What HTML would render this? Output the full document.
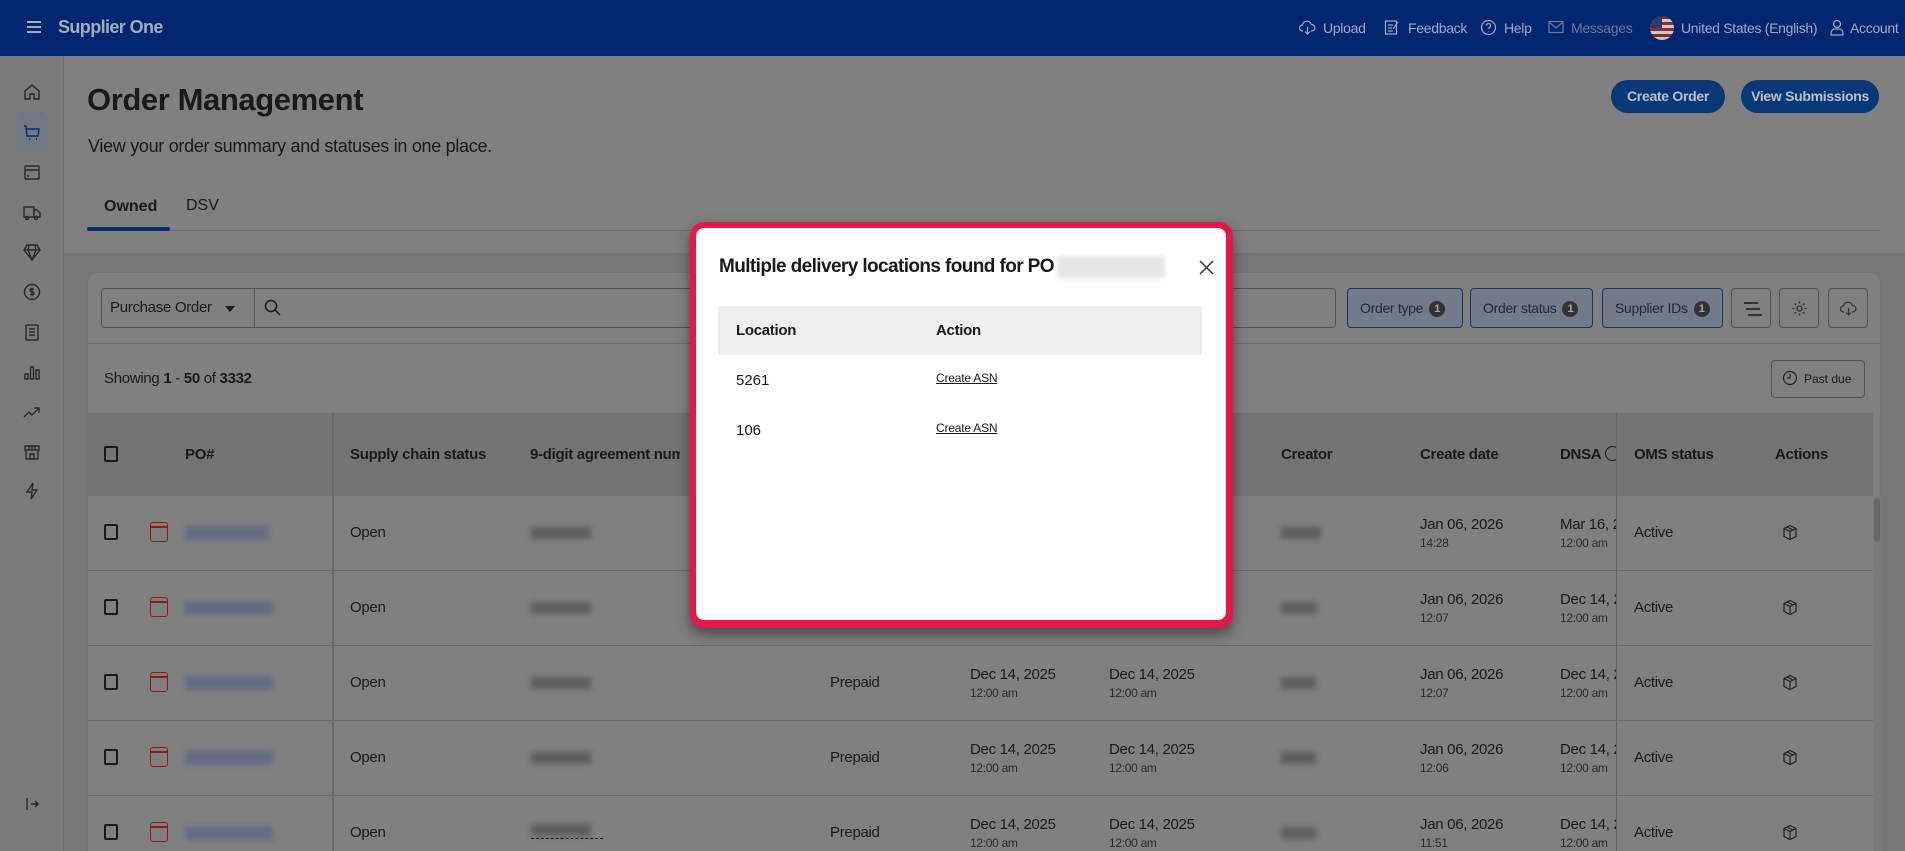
<!DOCTYPE html>
<html style="width:1905px;height:851px;overflow:hidden"><head><meta charset="utf-8"><style>
*{box-sizing:border-box;margin:0;padding:0}
body{width:1905px;height:851px;overflow:hidden;background:#808080;font-family:"Liberation Sans",sans-serif;color:#1a1a1a;position:relative}
.a{position:absolute}
.hdr{left:0;top:0;width:1905px;height:56px;background:#002670}
.ht{color:#a3abbf;font-size:14px;top:20px;letter-spacing:-0.3px}
.side{left:0;top:56px;width:64px;height:795px;background:#7b7b7b;border-right:1px solid #6e6e6e}
.si{left:22px;width:20px;height:20px}
.si svg{width:20px;height:20px;fill:none;stroke:#2a2a2a;stroke-width:1.4}
.btn{background:#0a3775;color:#b9c0cf;font-weight:bold;font-size:14px;border-radius:20px;text-align:center;line-height:33px;top:80px;height:33px;letter-spacing:-0.3px}
.fb{top:288px;height:40px;border:1px solid #1c3766;background:#717b8a;border-radius:4px;font-size:14px;color:#1e2a44;line-height:38px;padding-left:12px;letter-spacing:-0.3px}
.bd{display:inline-block;width:16px;height:16px;border-radius:8px;background:#333;color:#aaa;font-size:11px;line-height:16px;text-align:center;font-weight:bold;margin-left:6px;vertical-align:1px}
.ib{top:288px;height:40px;width:40px;border:1px solid #555;border-radius:4px}
.th{font-weight:bold;font-size:15px;top:446px;letter-spacing:-0.3px}
.rl{height:1px;background:#6c6c6c;left:87px;width:1786px}
.t{font-size:15px;letter-spacing:-0.3px}
.s{font-size:12px;color:#2b2b2b;letter-spacing:-0.3px}
.blur{background:#646c84;filter:blur(3px);height:14px}
.blurg{background:#5e5e5e;filter:blur(3px);height:12px}
.cb{width:14px;height:16px;border:2px solid #1a1a1a;border-radius:2px;left:104px}
.cal{left:150px;width:18px;height:20px;border:1.5px solid #8f1c1c;border-radius:3px}
.cal:before{content:"";position:absolute;left:-1px;right:-1px;top:3px;height:1.5px;background:#8f1c1c}
</style></head><body>
<div class="a hdr"></div>
<div class="a" style="left:27px;top:21px;width:14px;height:2px;background:#a3abbf;box-shadow:0 5px 0 #a3abbf,0 10px 0 #a3abbf"></div>
<div class="a" style="left:58px;top:17px;color:#a3abbf;font-weight:bold;font-size:18px;letter-spacing:-0.6px">Supplier One</div>
<svg class="a" style="left:1299px;top:19px" width="17" height="17" viewBox="0 0 17 17" fill="none" stroke="#a3abbf" stroke-width="1.2"><path d="M4 12H3.5a3 3 0 0 1 0-6 4.5 4.5 0 0 1 8.8-.5A3 3 0 0 1 13 12h-1M8.5 8v7M6 12.5l2.5 2.5 2.5-2.5"/></svg>
<div class="a ht" style="left:1323px">Upload</div>
<svg class="a" style="left:1384px;top:19px" width="16" height="17" viewBox="0 0 16 17" fill="none" stroke="#a3abbf" stroke-width="1.2"><rect x="1.5" y="2" width="11" height="13"/><path d="M4 6h5M4 9h4M4 12h5M9 10l5-7"/></svg>
<div class="a ht" style="left:1408px">Feedback</div>
<svg class="a" style="left:1480px;top:19px" width="17" height="17" viewBox="0 0 17 17" fill="none" stroke="#a3abbf" stroke-width="1.2"><circle cx="8.5" cy="8.5" r="7"/><path d="M6.5 6.5a2 2 0 1 1 2.5 2v1.5M8.5 12v.5"/></svg>
<div class="a ht" style="left:1504px">Help</div>
<svg class="a" style="left:1548px;top:20px" width="16" height="14" viewBox="0 0 16 14" fill="none" stroke="#6f7a99" stroke-width="1.2"><rect x="1" y="1.5" width="14" height="11"/><path d="M1 2l7 6 7-6"/></svg>
<div class="a ht" style="left:1571px;color:#6f7a99">Messages</div>
<div class="a" style="left:1650px;top:16px;width:24px;height:24px;border-radius:12px;overflow:hidden;background:repeating-linear-gradient(#8a2a35 0 3px,#c9c9c9 3px 6px)"><div style="width:12px;height:12px;background:#2a3a6a"></div></div>
<div class="a ht" style="left:1681px">United States (English)</div>
<svg class="a" style="left:1829px;top:19px" width="16" height="17" viewBox="0 0 16 17" fill="none" stroke="#a3abbf" stroke-width="1.2"><circle cx="8" cy="5" r="3.5"/><path d="M2 16v-2a4 4 0 0 1 4-4h4a4 4 0 0 1 4 4v2z"/></svg>
<div class="a ht" style="left:1850px">Account</div>

<div class="a side"></div>
<div class="a" style="left:16px;top:112px;width:32px;height:40px;background:#727882;border-radius:5px"></div>
<div class="a si" style="top:82px"><svg viewBox="0 0 20 20"><path d="M3 9l7-6 7 6v8h-5v-5H8v5H3z"/></svg></div>
<div class="a si" style="top:122px"><svg viewBox="0 0 20 20" style="stroke:#0a2f70"><path d="M2 4h2l1 10h11l1-7H5M7 17h1M14 17h1"/></svg></div>
<div class="a si" style="top:162px"><svg viewBox="0 0 20 20"><rect x="3" y="4" width="14" height="13" rx="1"/><path d="M3 8h14M5 14h2"/></svg></div>
<div class="a si" style="top:202px"><svg viewBox="0 0 20 20"><path d="M2 5h10v10H2zM12 8h3l3 3v4h-6"/><circle cx="5" cy="16" r="1.5"/><circle cx="14" cy="16" r="1.5"/></svg></div>
<div class="a si" style="top:242px"><svg viewBox="0 0 20 20"><path d="M5 3h10l3 5-8 10-8-10zM2 8h16M7 3l-1 5 4 10 4-10-1-5"/></svg></div>
<div class="a si" style="top:282px"><svg viewBox="0 0 20 20"><circle cx="10" cy="10" r="7.5"/><path d="M12 7.5c-1-1-4-1-4 .8s4 1.2 4 3c0 1.7-3 1.7-4 .7M10 5.5v9"/></svg></div>
<div class="a si" style="top:322px"><svg viewBox="0 0 20 20"><rect x="4" y="3" width="12" height="15" rx="1"/><path d="M7 7h6M7 10h6M7 13h6"/></svg></div>
<div class="a si" style="top:362px"><svg viewBox="0 0 20 20"><path d="M3 12h3v5H3zM8.5 5h3v12h-3zM14 8h3v9h-3z"/></svg></div>
<div class="a si" style="top:402px"><svg viewBox="0 0 20 20"><path d="M2 15l5-5 3 3 7-7M12 6h5v5"/></svg></div>
<div class="a si" style="top:442px"><svg viewBox="0 0 20 20"><path d="M3 4h14v4H3zM4 8v9h12V8M8 17v-5h4v5M7 4v4M10 4v4M13 4v4"/></svg></div>
<div class="a si" style="top:481px"><svg viewBox="0 0 20 20"><path d="M11 2L5 11h5l-1 7 6-9h-5z"/></svg></div>
<div class="a si" style="top:794px"><svg viewBox="0 0 20 20"><path d="M5 4v12M9 10h7M13 7l3 3-3 3"/></svg></div>

<div class="a" style="left:87px;top:82px;font-size:31px;font-weight:bold;letter-spacing:-0.4px">Order Management</div>
<div class="a" style="left:88px;top:136px;font-size:18px;letter-spacing:-0.3px">View your order summary and statuses in one place.</div>
<div class="a btn" style="left:1611px;width:114px">Create Order</div>
<div class="a btn" style="left:1741px;width:138px">View Submissions</div>
<div class="a" style="left:104px;top:198px;font-size:16px;font-weight:bold">Owned</div>
<div class="a" style="left:186px;top:197px;font-size:16px">DSV</div>
<div class="a" style="left:87px;top:230px;width:1794px;height:1px;background:#6e6e6e"></div>
<div class="a" style="left:87px;top:227px;width:83px;height:4px;background:#0a2f70;border-radius:2px"></div>

<div class="a" style="left:64px;top:253px;width:1841px;height:598px;background:#777"></div>
<div class="a" style="left:87px;top:272px;width:1794px;height:579px;background:#808080;border-radius:10px 10px 0 0;border:1px solid #747474;border-bottom:0"></div>
<div class="a" style="left:101px;top:288px;width:1235px;height:40px;border:1px solid #555;border-radius:4px"></div>
<div class="a" style="left:254px;top:288px;width:1px;height:40px;background:#555"></div>
<div class="a t" style="left:110px;top:299px">Purchase Order</div>
<div class="a" style="left:225px;top:306px;border:5px solid transparent;border-top:6px solid #1a1a1a"></div>
<svg class="a" style="left:264px;top:299px" width="18" height="18" viewBox="0 0 18 18" fill="none" stroke="#1a1a1a" stroke-width="1.5"><circle cx="7" cy="7" r="5.5"/><path d="M11 11l5 5"/></svg>
<div class="a fb" style="left:1347px;width:116px">Order type<span class="bd">1</span></div>
<div class="a fb" style="left:1470px;width:123px">Order status<span class="bd">1</span></div>
<div class="a fb" style="left:1602px;width:121px">Supplier IDs<span class="bd">1</span></div>
<div class="a ib" style="left:1731px"><div class="a" style="left:12px;top:13px;width:14px;height:2px;background:#333;box-shadow:2px 6px 0 -0px #333,4px 12px 0 #333"></div></div>
<div class="a ib" style="left:1779px"><svg class="a" style="left:11px;top:11px" width="17" height="17" viewBox="0 0 17 17" fill="none" stroke="#333" stroke-width="1.3"><circle cx="8.5" cy="8.5" r="2.5"/><path d="M8.5 1.5v2M8.5 13.5v2M1.5 8.5h2M13.5 8.5h2M3.5 3.5l1.5 1.5M12 12l1.5 1.5M3.5 13.5L5 12M12 5l1.5-1.5"/></svg></div>
<div class="a ib" style="left:1828px"><svg class="a" style="left:11px;top:11px" width="17" height="17" viewBox="0 0 17 17" fill="none" stroke="#333" stroke-width="1.2"><path d="M4 12H3.5a3 3 0 0 1 0-6 4.5 4.5 0 0 1 8.8-.5A3 3 0 0 1 13 12h-1M8.5 8v7M6 12.5l2.5 2.5 2.5-2.5"/></svg></div>
<div class="a" style="left:87px;top:343px;width:1794px;height:1px;background:#6e6e6e"></div>
<div class="a t" style="left:104px;top:370px">Showing <b>1</b> - <b>50</b> of <b>3332</b></div>
<div class="a" style="left:1771px;top:360px;width:94px;height:38px;border:1px solid #555;border-radius:4px;font-size:12px;line-height:36px;padding-left:32px">Past due</div>
<svg class="a" style="left:1782px;top:370px" width="16" height="16" viewBox="0 0 16 16" fill="none" stroke="#222" stroke-width="1.2"><circle cx="8" cy="8" r="6.5"/><path d="M8 4v4H5"/></svg>

<div class="a" style="left:87px;top:413px;width:1786px;height:83px;background:#747474"></div>
<div class="a" style="left:1873px;top:496px;width:8px;height:355px;background:#7a7a7a"></div>
<div class="a" style="left:1874px;top:498px;width:6px;height:44px;background:#666;border-radius:3px"></div>
<div class="a" style="left:332px;top:413px;width:2px;height:438px;background:#6a6a6a"></div>
<div class="a" style="left:1616px;top:413px;width:1px;height:438px;background:#666"></div>
<div class="a cb" style="top:446px"></div>
<div class="a th" style="left:185px">PO#</div>
<div class="a th" style="left:350px">Supply chain status</div>
<div class="a th" style="left:530px;width:150px;overflow:hidden;white-space:nowrap">9-digit agreement number</div>
<div class="a th" style="left:1281px">Creator</div>
<div class="a th" style="left:1420px">Create date</div>
<div class="a th" style="left:1560px;width:56px;overflow:hidden;white-space:nowrap">DNSA <span style="display:inline-block;width:15px;height:15px;border:1.5px solid #1a1a1a;border-radius:8px;vertical-align:-2px"></span></div>
<div class="a th" style="left:1634px">OMS status</div>
<div class="a th" style="left:1775px">Actions</div>

<div class="a rl" style="top:570px"></div>
<div class="a rl" style="top:645px"></div>
<div class="a rl" style="top:720px"></div>
<div class="a rl" style="top:795px"></div>

<div class="a cb" style="top:524px"></div><div class="a cal" style="top:522px"></div><div class="a blur" style="left:185px;top:526px;width:84px"></div><div class="a t" style="left:350px;top:524px">Open</div><div class="a blurg" style="left:531px;top:527px;width:60px"></div>
<div class="a blurg" style="left:1281px;top:527px;width:40px"></div><div class="a t" style="left:1420px;top:516px">Jan 06, 2026</div><div class="a s" style="left:1420px;top:536px">14:28</div><div class="a t" style="left:1560px;top:516px;width:56px;overflow:hidden;white-space:nowrap">Mar 16, 2026</div><div class="a s" style="left:1560px;top:536px">12:00 am</div><div class="a t" style="left:1634px;top:524px">Active</div>

<div class="a cb" style="top:599px"></div><div class="a cal" style="top:597px"></div><div class="a blur" style="left:185px;top:601px;width:88px"></div><div class="a t" style="left:350px;top:599px">Open</div><div class="a blurg" style="left:531px;top:602px;width:60px"></div>
<div class="a blurg" style="left:1281px;top:602px;width:35px"></div><div class="a t" style="left:1420px;top:591px">Jan 06, 2026</div><div class="a s" style="left:1420px;top:611px">12:07</div><div class="a t" style="left:1560px;top:591px;width:56px;overflow:hidden;white-space:nowrap">Dec 14, 2025</div><div class="a s" style="left:1560px;top:611px">12:00 am</div><div class="a t" style="left:1634px;top:599px">Active</div>

<div class="a cb" style="top:674px"></div><div class="a cal" style="top:672px"></div><div class="a blur" style="left:185px;top:676px;width:88px"></div><div class="a t" style="left:350px;top:674px">Open</div><div class="a blurg" style="left:531px;top:677px;width:60px"></div><div class="a t" style="left:830px;top:674px">Prepaid</div><div class="a t" style="left:970px;top:666px">Dec 14, 2025</div><div class="a s" style="left:970px;top:686px">12:00 am</div><div class="a t" style="left:1109px;top:666px">Dec 14, 2025</div><div class="a s" style="left:1109px;top:686px">12:00 am</div>
<div class="a blurg" style="left:1281px;top:677px;width:35px"></div><div class="a t" style="left:1420px;top:666px">Jan 06, 2026</div><div class="a s" style="left:1420px;top:686px">12:07</div><div class="a t" style="left:1560px;top:666px;width:56px;overflow:hidden;white-space:nowrap">Dec 14, 2025</div><div class="a s" style="left:1560px;top:686px">12:00 am</div><div class="a t" style="left:1634px;top:674px">Active</div>

<div class="a cb" style="top:749px"></div><div class="a cal" style="top:747px"></div><div class="a blur" style="left:185px;top:751px;width:88px"></div><div class="a t" style="left:350px;top:749px">Open</div><div class="a blurg" style="left:531px;top:752px;width:60px"></div><div class="a t" style="left:830px;top:749px">Prepaid</div><div class="a t" style="left:970px;top:741px">Dec 14, 2025</div><div class="a s" style="left:970px;top:761px">12:00 am</div><div class="a t" style="left:1109px;top:741px">Dec 14, 2025</div><div class="a s" style="left:1109px;top:761px">12:00 am</div>
<div class="a blurg" style="left:1281px;top:752px;width:35px"></div><div class="a t" style="left:1420px;top:741px">Jan 06, 2026</div><div class="a s" style="left:1420px;top:761px">12:06</div><div class="a t" style="left:1560px;top:741px;width:56px;overflow:hidden;white-space:nowrap">Dec 14, 2025</div><div class="a s" style="left:1560px;top:761px">12:00 am</div><div class="a t" style="left:1634px;top:749px">Active</div>

<div class="a cb" style="top:824px"></div><div class="a cal" style="top:822px"></div><div class="a blur" style="left:185px;top:826px;width:88px"></div><div class="a t" style="left:350px;top:824px">Open</div><div class="a blurg" style="left:531px;top:824px;width:60px"></div><div class="a" style="left:531px;top:838px;width:72px;border-top:1.5px dashed #1a1a1a"></div><div class="a t" style="left:830px;top:824px">Prepaid</div><div class="a t" style="left:970px;top:816px">Dec 14, 2025</div><div class="a s" style="left:970px;top:836px">12:00 am</div><div class="a t" style="left:1109px;top:816px">Dec 14, 2025</div><div class="a s" style="left:1109px;top:836px">12:00 am</div>
<div class="a blurg" style="left:1281px;top:827px;width:35px"></div><div class="a t" style="left:1420px;top:816px">Jan 06, 2026</div><div class="a s" style="left:1420px;top:836px">11:51</div><div class="a t" style="left:1560px;top:816px;width:56px;overflow:hidden;white-space:nowrap">Dec 14, 2025</div><div class="a s" style="left:1560px;top:836px">12:00 am</div><div class="a t" style="left:1634px;top:824px">Active</div>

<svg class="a" style="left:1782px;top:524px" width="16" height="17" viewBox="0 0 16 17" fill="none" stroke="#222" stroke-width="1.2"><path d="M8 1.5l6 3v8l-6 3-6-3v-8zM2 4.5l6 3 6-3M8 7.5v8M5 3l6 3"/></svg>
<svg class="a" style="left:1782px;top:599px" width="16" height="17" viewBox="0 0 16 17" fill="none" stroke="#222" stroke-width="1.2"><path d="M8 1.5l6 3v8l-6 3-6-3v-8zM2 4.5l6 3 6-3M8 7.5v8M5 3l6 3"/></svg>
<svg class="a" style="left:1782px;top:674px" width="16" height="17" viewBox="0 0 16 17" fill="none" stroke="#222" stroke-width="1.2"><path d="M8 1.5l6 3v8l-6 3-6-3v-8zM2 4.5l6 3 6-3M8 7.5v8M5 3l6 3"/></svg>
<svg class="a" style="left:1782px;top:749px" width="16" height="17" viewBox="0 0 16 17" fill="none" stroke="#222" stroke-width="1.2"><path d="M8 1.5l6 3v8l-6 3-6-3v-8zM2 4.5l6 3 6-3M8 7.5v8M5 3l6 3"/></svg>
<svg class="a" style="left:1782px;top:824px" width="16" height="17" viewBox="0 0 16 17" fill="none" stroke="#222" stroke-width="1.2"><path d="M8 1.5l6 3v8l-6 3-6-3v-8zM2 4.5l6 3 6-3M8 7.5v8M5 3l6 3"/></svg>

<!-- modal -->
<div class="a" style="left:690px;top:222px;width:543px;height:406px;background:#e8174a;border-radius:14px;box-shadow:0 6px 14px rgba(0,0,0,0.45)"></div>
<div class="a" style="left:696px;top:228px;width:530px;height:392px;background:#fff;border-radius:8px"></div>
<div class="a" style="left:719px;top:256px;font-size:19px;font-weight:bold;letter-spacing:-0.6px;color:#1a1a1a;white-space:nowrap">Multiple delivery locations found for PO</div>
<div class="a" style="left:1057px;top:256px;width:108px;height:22px;background:#e6e6e6;filter:blur(2px)"></div>
<svg class="a" style="left:1199px;top:260px" width="15" height="15" viewBox="0 0 15 15" stroke="#333" stroke-width="1.5"><path d="M1 1l13 13M14 1L1 14"/></svg>
<div class="a" style="left:718px;top:306px;width:484px;height:49px;background:#eeeeee"></div>
<div class="a" style="left:736px;top:322px;font-size:15px;font-weight:bold;letter-spacing:-0.3px">Location</div>
<div class="a" style="left:936px;top:322px;font-size:15px;font-weight:bold;letter-spacing:-0.3px">Action</div>
<div class="a" style="left:736px;top:372px;font-size:15px">5261</div>
<div class="a" style="left:936px;top:371px;font-size:12px;text-decoration:underline;letter-spacing:-0.2px">Create ASN</div>
<div class="a" style="left:736px;top:422px;font-size:15px">106</div>
<div class="a" style="left:936px;top:421px;font-size:12px;text-decoration:underline;letter-spacing:-0.2px">Create ASN</div>
</body></html>
